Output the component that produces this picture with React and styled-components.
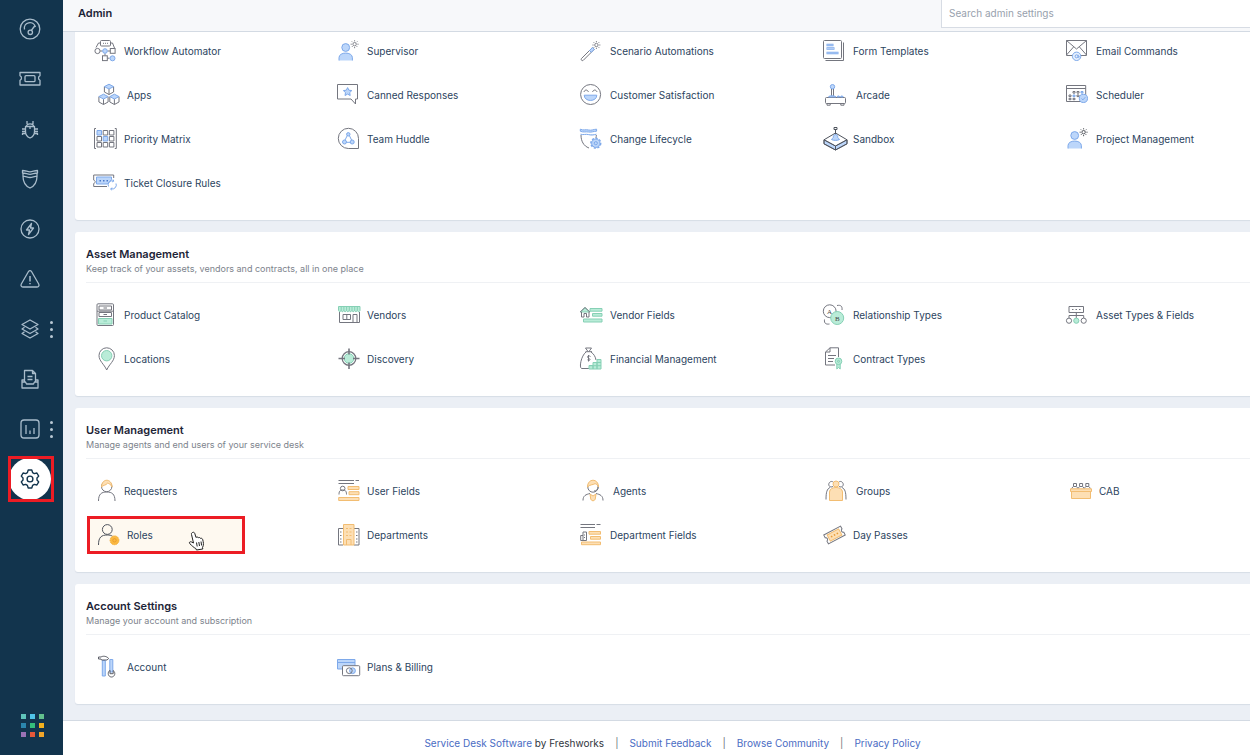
import styled, { createGlobalStyle } from "styled-components";

const GlobalStyle = createGlobalStyle`
  * {
    box-sizing: border-box;
  }

  body {
    margin: 0;
    background: #ebeff5;
    color: #2c3e5a;
    font-family: Inter, "Liberation Sans", sans-serif;
    font-size: 10px;
  }

  a {
    text-decoration: none;
  }
`;

const ink = "#74767f";
const blue = { line: "#7ea9ea", fill: "#bcd6fa" };
const green = { line: "#86d0b5", fill: "#b9ecd8" };
const orange = { line: "#f2bd72", fill: "#fddfb4" };

/* ---------- layout ---------- */

const Shell = styled.div`
  display: flex;
  min-height: 100vh;
`;

const Sidebar = styled.nav`
  display: flex;
  flex: none;
  flex-direction: column;
  justify-content: space-between;
  width: 63px;
  padding: 4px 0 18px;
  background: #12344d;
`;

const NavList = styled.ul`
  margin: 0;
  padding: 0;
  list-style: none;
`;

const NavItem = styled.li`
  position: relative;
  display: flex;
  align-items: center;
  height: 50px;
  padding-left: 8px;
`;

const NavButton = styled.button`
  display: flex;
  align-items: center;
  justify-content: center;
  width: 46px;
  height: 46px;
  padding: 0;
  overflow: hidden;
  border: 3px solid ${(p) => (p.$active ? "#ec1c24" : "transparent")};
  background: none;
  color: ${(p) => (p.$active ? "#12344d" : "#a9bccb")};
  cursor: pointer;
`;

const Disc = styled.span`
  display: flex;
  flex: none;
  align-items: center;
  justify-content: center;
  width: 42px;
  height: 42px;
  margin-right: 2px;
  border-radius: 50%;
  background: ${(p) => (p.$active ? "#fff" : "none")};
`;

const Dots = styled.span`
  position: absolute;
  top: 17px;
  left: 50px;
  display: grid;
  gap: 4px;

  i {
    width: 3px;
    height: 3px;
    border-radius: 50%;
    background: #b9c8d4;
  }
`;

const Switcher = styled.button`
  display: grid;
  grid-template-columns: repeat(3, 5px);
  gap: 4px;
  width: 23px;
  margin-left: 21px;
  padding: 0;
  border: 0;
  background: none;
  cursor: pointer;
`;

const Square = styled.span`
  height: 5px;
  background: ${(p) => p.$color};
`;

const Main = styled.div`
  display: flex;
  flex: 1;
  flex-direction: column;
  min-width: 0;
  overflow: hidden;
`;

const Header = styled.header`
  position: relative;
  display: flex;
  justify-content: space-between;
  height: 31px;
  padding-left: 15px;
  background: #f7f8fa;
  box-shadow: 0 1px 0 #d3dae3;
`;

const PageTitle = styled.h1`
  margin: 0;
  color: #1d2437;
  font-size: 11px;
  font-weight: 600;
  line-height: 27px;
`;

const Search = styled.input`
  width: 26%;
  min-width: 309px;
  height: 28px;
  padding: 0 7px 2px;
  border: 1px solid #d7dce4;
  border-width: 0 0 1px 1px;
  background: #fff;
  color: #2c3e5a;
  font: inherit;

  &::placeholder {
    color: #98a1ad;
    opacity: 1;
  }
`;

const Content = styled.main`
  display: grid;
  gap: 12px;
  padding: 0 0 16px 12px;
`;

const Card = styled.section`
  padding-left: 11px;
  border-radius: ${(p) => (p.$continued ? "0 0 0 3px" : "3px 0 0 3px")};
  background: #fff;
  box-shadow: 0 1px 1px #d6dde6;
`;

const CardHeader = styled.header`
  height: 51px;
  padding-top: 14px;
  border-bottom: 1px solid #eff1f4;
`;

const CardTitle = styled.h2`
  margin: 0;
  color: #1d2437;
  font-size: 11px;
  font-weight: 600;
  line-height: 16px;
`;

const CardText = styled.p`
  margin: 0;
  color: #7d838c;
  font-size: 9px;
  line-height: 14px;
`;

const Grid = styled.div`
  display: grid;
  grid-template-columns: repeat(5, minmax(243px, 1fr));
  gap: 6px 0;
  padding: ${(p) => (p.$continued ? "1px" : "13px")} 0 18px;
`;

const Setting = styled.a`
  position: relative;
  display: flex;
  align-items: center;
  gap: 8px;
  width: 158px;
  height: 38px;
  margin-left: 1px;
  padding-left: 2px;
  border: 3px solid ${(p) => (p.$active ? "#ec1c24" : "transparent")};
  background: ${(p) => (p.$active ? "#fef9f0" : "none")};
  color: #2c4460;
  white-space: nowrap;

  svg {
    flex: none;
  }
`;

const Pointer = styled.svg`
  position: absolute;
  top: 12px;
  left: 98px;
`;

const Footer = styled.footer`
  display: flex;
  flex: 1;
  align-items: flex-start;
  justify-content: center;
  gap: 11px;
  padding: 12px 0 2px 32px;
  border-top: 1px solid #d3dae3;
  background: #fff;
  color: #30343c;
  line-height: 20px;

  a {
    color: #4a6cc3;
  }
`;

const Divider = styled.span`
  color: #70757d;
`;

/* ---------- icons ---------- */

const Sun = ({ x, y, color = ink }) => (
  <g transform={`translate(${x} ${y})`} stroke={color} strokeWidth=".9">
    <circle r="1.7" />
    <path d="M0-2.8V-4M0 2.8V4M-2.8 0H-4M2.8 0H4M-2-2l-.8-.8M2-2l.8-.8M-2 2l-.8.8M2 2l.8.8" />
  </g>
);

const Cube = ({ x, y }) => (
  <g transform={`translate(${x} ${y})`}>
    <path d="M-4.6-2.6V2.8L0 5.3 4.6 2.8V-2.6M0-.2V5.3" />
    <path d="M0-5 4.6-2.6 0-.2-4.6-2.6Z" fill={blue.fill} stroke={blue.line} />
  </g>
);

const Cog = ({ x, y, tint }) => (
  <g transform={`translate(${x} ${y})`} stroke={tint.line}>
    <circle r="4.9" strokeWidth="1.5" strokeDasharray="2.2 1.5" />
    <circle r="4.2" fill={tint.fill} />
    <circle r="1.6" />
  </g>
);

const Person = ({ sun }) => (
  <>
    <g fill={blue.fill} stroke={blue.line}>
      <path d="M4 21.5v-2.8c0-6.2 13.4-6.2 13.4 0v2.8" />
      <circle cx="10.7" cy="8.5" r="3.9" />
    </g>
    <Sun x="19.6" y="5.2" color={sun} />
  </>
);

const settingIcons = {
  workflow: (
    <>
      <rect x="8.5" y="1.5" width="10" height="5.5" rx="1" />
      <path d="M11 4.3h1M13 4.3h1M15 4.3h1M8.5 4H6.5L4 8.500M18.5 4h2l2 5M8.3 12h2.2M15.5 12h2.7M13 14.5v2M15.5 19.2h2" />
      <circle cx="5.5" cy="12" r="2.6" />
      <rect x="18.3" y="9.5" width="4.8" height="4.8" />
      <rect x="10.5" y="16.8" width="4.8" height="4.8" />
      <g fill={blue.fill} stroke={blue.line}>
        <circle cx="13" cy="12" r="2.3" />
        <circle cx="20.5" cy="19.3" r="2.5" />
      </g>
    </>
  ),
  supervisor: <Person />,
  wand: (
    <>
      <path d="m3.4 19.6 11-11 1.8 1.8-11 11c-1.2.8-2.6-.6-1.8-1.8Z" />
      <path d="m11.5 11.5 3-3 1.8 1.8-3 3Z" fill={blue.fill} stroke={blue.line} />
      <Sun x="18.4" y="6" />
    </>
  ),
  form: (
    <>
      <path d="M22.5 3.5v18h-18" />
      <rect x="2.5" y="1.5" width="18" height="18" rx="1" />
      <path d="M5.5 6h7M5.5 9.5h8M5.5 14h12" stroke={blue.line} strokeWidth="2.4" />
      <path d="M6 6h6M6 9.5h7M6 14h11" stroke={blue.fill} strokeWidth=".8" />
    </>
  ),
  email: (
    <>
      <path d="M8 16.5H2.5v-15h20v15h-5.5M2.5 1.5l10 8.5 10-8.5M2.5 16l7-8M22.5 16l-7-8" />
      <g stroke={blue.line}>
        <circle cx="12.6" cy="17.3" r="4.2" fill="#e6f0fe" />
        <circle cx="12.6" cy="17.3" r="1.5" />
        <path d="M14.2 15.8v2.4c.4.8 1.2.4 1.2-.8" />
      </g>
    </>
  ),
  apps: (
    <>
      <Cube x="17" y="6.2" />
      <Cube x="11.5" y="16.2" />
      <Cube x="22.4" y="16.2" />
    </>
  ),
  canned: (
    <>
      <path d="M2.5 1.5h20v14.5h-2v5l-4.5-5H2.5Z" />
      <path
        d="m12.6 4.6 1.3 2.6 2.9.4-2.1 2 .5 2.9-2.6-1.4-2.6 1.4.5-2.9-2.1-2 2.9-.4Z"
        fill={blue.fill}
        stroke={blue.line}
      />
    </>
  ),
  smile: (
    <>
      <circle cx="12.6" cy="11.5" r="10" />
      <path d="M6 9c.6-2.6 3.6-2.6 4.4 0M14.6 9c.6-2.6 3.6-2.6 4.4 0" />
      <path d="M6.2 12.2h12.6c0 7-12.6 7-12.6 0Z" fill={blue.fill} stroke={blue.line} />
    </>
  ),
  arcade: (
    <>
      <path d="M10.500 6v8.500h2V6M6 20.500v1.700h3.200v-1.700M19.800 20.500v1.700H23v-1.700" />
      <rect x="4.5" y="14.5" width="20" height="6" rx="1" />
      <g fill={blue.fill} stroke={blue.line}>
        <circle cx="11.5" cy="3.7" r="2.2" />
        <path d="M7.5 14c.5-1.6 6.5-1.6 7.5 0ZM16 14c.3-1.4 2.4-1.4 2.7 0ZM19.5 14c.3-1.4 2.4-1.4 2.7 0Z" />
      </g>
    </>
  ),
  scheduler: (
    <>
      <path d="M2.5 2.5h19.2v16H2.5ZM2.5 5.5h19.2" />
      <path d="M9 8.5h2v1.600H9ZM13 8.5h2v1.600h-2ZM5 12h2v1.600H5ZM13 12h2v1.600h-2ZM5 15.300h2v1.400H5ZM9 15.300h2v1.400H9Z" />
      <g fill={blue.fill} stroke={blue.line}>
        <path d="M17 8.5h2v1.600h-2ZM9 12h2v1.600H9Z" />
        <circle cx="19.4" cy="15.4" r="4.1" />
        <path d="m17.5 15.5 1.4 1.4 2.4-2.7" />
      </g>
    </>
  ),
  matrix: (
    <>
      <path d="M4 1.5H2.5v20H4M22.8 1.5h1.5v20h-1.5" />
      <path d="M11.2 3.5h4.5V8h-4.5ZM17.4 3.5h4.5V8h-4.5ZM5 9.5h4.5V14H5ZM17.4 9.5h4.5V14h-4.5ZM5 15.5h4.5V20H5ZM11.2 15.5h4.5V20h-4.5ZM17.4 15.5h4.5V20h-4.5Z" />
      <path d="M5 3.5h4.5V8H5ZM11.2 9.5h4.5V14h-4.5Z" fill={blue.fill} stroke={blue.line} />
    </>
  ),
  huddle: (
    <>
      <path d="M23.5 21.5H13.3a10.1 10.1 0 1 1 10.2-10Z" />
      <g fill={blue.fill} stroke={blue.line}>
        <path d="M12.8 7.5 9 15M13.8 7.5 17.6 15M10.4 15.3h6" fill="none" />
        <circle cx="13.3" cy="7.3" r="1.7" />
        <circle cx="9.5" cy="15" r="2" />
        <circle cx="17.2" cy="15" r="2" />
      </g>
    </>
  ),
  lifecycle: (
    <>
      <path d="M3 8c0 6 2.5 11 8 13M18.3 8c0 1.2-.1 2-.3 3" />
      <path
        d="M2.3 2.2c3 1.5 5.5 0 8.3.8s5-.8 8-.8v2c-3 0-5.2 1.4-8 .8s-5.3.7-8.3-.8ZM2.5 7.2c3 1 5.2-.4 8.1.4s5 .4 7.8-.4"
        fill={blue.fill}
        stroke={blue.line}
      />
      <Cog x="17.8" y="16.2" tint={blue} />
    </>
  ),
  sandbox: (
    <>
      <path d="M3 12.8v4L14.5 23 26 16.8v-4L14.5 19Z" fill={blue.fill} />
      <path
        d="m14.5 6 11.5 6.8L14.5 19 3 12.8ZM14.5 19v4M3 12.8v4L14.5 23 26 16.8v-4M13 .5h3v2h-3ZM14.5 2.5v5"
        stroke="#4f545e"
      />
      <path
        d="M10.500 12.500c.4-1 1.300-1 1.700-2 0-4 4.600-4 4.600 0 .4 1 1.300 1 1.700 2-2 1.200-6 1.200-8 0Z"
        fill={blue.fill}
        stroke={blue.line}
      />
    </>
  ),
  project: <Person sun="#3f434b" />,
  closure: (
    <>
      <path d="M15 15.5H1.7v-3c2-.6 2-2.8 0-3.4V4h20v3" />
      <path d="M4.5 6h15v2.5l-4 4.5h-11Z" fill={blue.fill} stroke={blue.line} />
      <path d="M7.5 9.7H9M11 9.7h1.500M14.5 9.700H16" stroke="#4b79c9" strokeWidth="1.4" />
      <path
        d="M16.500 15.500a4 4 0 0 1 5-5.500M24 12.500a4 4 0 0 1-5 5.300M21 8.500l.8 1.600-1.600.8M19.500 19.300l-.8-1.600 1.600-.8"
        stroke={blue.line}
      />
    </>
  ),
  catalog: (
    <>
      <rect x="5" y=".8" width="16.5" height="21.7" rx="1" />
      <path d="M7 3h12.5v4H7ZM7 9.5h12.5v4H7ZM11.5 5H15M11.5 11.5H15M5 8.2h16.5" />
      <path d="M6.5 15.5H20V21H6.5ZM11.5 18H15" fill={green.fill} stroke={green.line} />
    </>
  ),
  vendors: (
    <>
      <path d="M4.5 9v10.5h20V9M8 11.5h7.5v5H8ZM11.8 11.5v5M18 19.5v-8h4v8" />
      <path
        d="M3.5 3.500H25v4c-.8 1.600-2 1.600-2.700 0-.8 1.600-2 1.600-2.700 0-.8 1.600-2 1.600-2.700 0-.8 1.600-2 1.600-2.700 0-.8 1.600-2 1.600-2.700 0-.8 1.600-2 1.600-2.700 0-.8 1.600-2 1.600-2.700 0-.8 1.600-1.900 1.600-2.600 0Z"
        fill={green.fill}
        stroke={green.line}
      />
      <path
        d="M6.2 3.5v4M8.900 3.500v4M11.600 3.500v4M14.300 3.500v4M17 3.500v4M19.700 3.500v4M22.300 3.500v4"
        stroke={green.line}
      />
    </>
  ),
  vendorFields: (
    <>
      <path
        d="M12 5.500h12v2.700H12ZM14.500 10.500H24v2.700h-9.500ZM5.500 16H24v3H5.500ZM2.500 9 7 4.500 11.500 9Z"
        fill={green.fill}
        stroke={green.line}
      />
      <path d="M3.500 9v5H6v-3.500h2.500V14H11V9M2 9.200l5-4.700 5 4.700" />
    </>
  ),
  relationship: (
    <>
      <circle cx="8.7" cy="8.2" r="6.4" />
      <path d="M16 2.5c4-.8 5.500 1 5 4.500M3.500 16.500c-.5 4 1.500 5 5 4.500" />
      <circle cx="16.2" cy="15" r="6.5" fill={green.fill} stroke={green.line} />
      <g fill="#444" stroke="none" fontFamily="Liberation Serif" fontSize="7">
        <text x="6" y="10.500">A</text>
        <text x="14" y="17.500">B</text>
      </g>
    </>
  ),
  assetTypes: (
    <>
      <path d="M5 3.500h14.500v6H5ZM8 6.500h1.500M11.500 6.500H13M15 6.500h1.500M12.300 9.500V15M5 15v-2.500h14.700V15" />
      <circle cx="5" cy="17.7" r="2.6" />
      <circle cx="19.7" cy="17.7" r="2.6" />
      <circle cx="12.3" cy="17.7" r="2.6" fill={green.fill} stroke={green.line} />
    </>
  ),
  location: (
    <>
      <path d="M14.7 23C12 17 7 14 7 8.500a7.700 7.700 0 0 1 15.400 0C22.400 14 17.400 17 14.700 23Z" />
      <circle cx="14.7" cy="8.7" r="5.2" fill={green.fill} stroke={green.line} />
    </>
  ),
  discovery: (
    <>
      <circle cx="14" cy="11.5" r="6.8" strokeWidth="1.3" />
      <circle cx="14" cy="11.5" r="4.8" fill={green.fill} stroke={green.line} />
      <path d="M14 1.500V7.500M14 15.500V22M3.500 11.500H10M18 11.500h6.500" strokeWidth="1.6" />
    </>
  ),
  finance: (
    <>
      <path d="M10 4.500 7.500 1h6L11 4.500M7.500 4.700h6.500M8 5C3 9 1 20.500 3.500 21.500H12M13 5c3 2 4.500 5 5 8" />
      <path d="M12.500 9.500c-2-1.500-4.500.3-2 1.600s2 3-1 1.700M10.500 8v6.500" />
      <path
        d="M11 18.500h4V22h-4ZM15 15.500h4V22h-4ZM19 12.500h4V22h-4ZM11 18.700h12M15 15.500h8"
        fill={green.fill}
        stroke={green.line}
      />
    </>
  ),
  contract: (
    <>
      <path d="M14 18H4.500V5L9 .8h8.500V10M4.500 5H9V.8M7 8.500h8M7 11.500h6M7 14.500h5" />
      <g fill={green.fill} stroke={green.line}>
        <path d="M15.800 17v5l1.700-1.500 1.700 1.500v-5" />
        <circle cx="17.5" cy="14.3" r="3.3" />
        <circle cx="17.5" cy="14.3" r="1" />
      </g>
    </>
  ),
  requester: (
    <>
      <circle cx="14.7" cy="7.5" r="5.2" />
      <path d="M6.500 22c0-7 3-9 8.200-9s8.300 2 8.300 9" />
      <path
        d="M9.500 8c0-9 10.500-9 10.500 0-1-2.500-3-3.500-4.500-3.800C14 6.500 11 6 9.500 8Z"
        fill={orange.fill}
        stroke={orange.line}
      />
    </>
  ),
  userFields: (
    <>
      <path d="M3.500 1.500H19M20.500 1.500H24M3.500 4.500H19M4 15.500c0-4 1.500-4.500 3.700-4.500s3.800.5 3.800 4.500" />
      <circle cx="7.7" cy="9.5" r="2.3" />
      <path
        d="M13 7.500h11v3H13ZM14 12.700h10v3H14ZM3.700 18.500H24v3H3.700Z"
        fill={orange.fill}
        stroke={orange.line}
      />
    </>
  ),
  agent: (
    <>
      <circle cx="15" cy="8" r="5.2" />
      <path d="M5 21.500c0-5 3-6 7-7M25 21.500c0-5-3-6-7-7M20 8c0 2.500-1.500 4-4 4" />
      <path
        d="M9.500 8c0-9 11-9 11 0-1-2.500-2-3-3.500-3.300C15 6 11.500 5.500 9.500 8ZM12 15l3 2 3-2-.8 5.500L15 22l-2.200-1.500Z"
        fill={orange.fill}
        stroke={orange.line}
      />
    </>
  ),
  groups: (
    <>
      <path d="M12 7.500C9 9 7 6.500 8 4.300 9 2 11.500 2 12.500 3.500M18 7.500c3 1.500 5-1 4-3.200-1-2.300-3.500-2.300-4.500-.8M5 20.500C5 13 6 10 9 8.500M25 20.500C25 13 24 10 21 8.500" />
      <g fill={orange.fill} stroke={orange.line}>
        <path d="M8.500 21.500V13c0-6 13-6 13 0v8.500Z" />
        <circle cx="15" cy="5" r="3" />
      </g>
    </>
  ),
  cab: (
    <>
      <path d="M7.500 9.500 9.300 7.500h3.200l1.500 2 1.500-2h3.200l1.500 2 1.500-2h3.200l1.600 2M9.500 7V4.500h3V7M15.600 7V4.500h3V7M21.800 7V4.500h3V7" />
      <path
        d="M7.500 12.500h19v7h-19ZM6.500 9.800h21v2.700h-21Z"
        fill={orange.fill}
        stroke={orange.line}
      />
    </>
  ),
  roles: (
    <>
      <g stroke="#4f545e">
        <circle cx="15.3" cy="6.5" r="4.9" />
        <path d="M6.500 22c0-8 3-10 8.800-10 2.200 0 4 .3 5.200 1.200" />
      </g>
      <circle
        cx="22.5"
        cy="17.3"
        r="4.4"
        fill="#fbb941"
        stroke="#f5ad35"
        strokeDasharray="1.5 .6"
      />
      <circle cx="22.5" cy="17.3" r="1.7" stroke="#e4952a" strokeWidth=".8" />
    </>
  ),
  departments: (
    <>
      <path d="M8 5.500H3.500V22H8M19 5.500h5V22h-5M5 9h1.500M5 12.500h1.500M5 16h1.500M5 19h1.500M21 9h1.500M21 12.500h1.500M21 16h1.500M21 19h1.500" />
      <path d="M8.500 1.500H19V22H8.500Z" fill={orange.fill} stroke={orange.line} />
      <path
        d="M11 5.500h2M14.500 5.500h2M11 9h2M14.500 9h2M11 12.500h2M14.500 12.500h2M11.500 22v-5.500H16V22"
        stroke={orange.line}
      />
    </>
  ),
  departmentFields: (
    <>
      <path d="M2.500 1.500H17M18.500 1.500h4M2.500 4.500H17M5 9h3.500v8.500H5ZM5 12.500H2.700v5H5M6.500 11.500v1M6.500 14v1" />
      <path
        d="M11 8.500h11.500v2.700H11ZM12.500 13.500h10v2.700h-10ZM3.500 19h19v2.700h-19Z"
        fill={orange.fill}
        stroke={orange.line}
      />
    </>
  ),
  passes: (
    <g transform="rotate(-28 13.5 12)">
      <path d="M4 7h19v3.200c-2 .5-2 3.100 0 3.600V17H4v-3.200c2-.5 2-3.100 0-3.600Z" />
      <path d="M7 8.500h13v7H7Z" fill={orange.fill} stroke={orange.line} />
      <path d="M9.500 12H11M12.800 12h1.500M16 12h1.500" stroke="#e89c38" strokeWidth="1.6" />
    </g>
  ),
  account: (
    <>
      <g fill={blue.fill} stroke={blue.line}>
        <path d="M10.300 5.500h3V21h-3ZM17.800 4.500h3V17h-3Z" />
      </g>
      <g fill="#fff" stroke="#5d5f68">
        <path d="M6.500 2H9c2-1.300 5.500-1 7.700 1.500L15 5H9.500L9 4H6.500Z" />
        <path d="M18 15.300c-3 2-2 6.500 1.400 6.700 3.500 0 4.600-4.500 1.800-6.500v3.200H18Z" />
      </g>
    </>
  ),
  billing: (
    <>
      <path d="M2.500 4.500H20V14H2.500ZM2.500 7.500H20" fill={blue.fill} stroke={blue.line} />
      <rect x="7.5" y="10.7" width="17.2" height="10" rx="1" fill="#fff" />
      <circle cx="17.5" cy="15.7" r="2.9" fill={blue.fill} stroke={blue.line} />
      <circle cx="14.3" cy="15.7" r="2.9" />
    </>
  ),
};

const navIcons = {
  dashboard: (
    <>
      <circle cx="12" cy="12" r="9.8" />
      <path d="M6.500 12.500c-1.500-7.500 9-9.500 11-2.500M13.300 13.500l3.700-5" />
      <circle cx="12.3" cy="15.3" r="2.2" />
    </>
  ),
  tickets: (
    <>
      <path d="M2 5.500h20v3.200c-2 1-2 3.600 0 4.600V18H2v-4.700c2-1 2-3.600 0-4.600Z" />
      <rect x="7" y="8.7" width="10" height="6" rx="1" />
    </>
  ),
  problems: (
    <path d="M9 7V4M15 7V4M8.500 9.500c0-3.500 7-3.500 7 0M7.500 9.500h9v5c0 3-2 5.500-4.500 6.500-2.500-1-4.500-3.500-4.500-6.500ZM7.500 12H4M7.500 14.500H4M8 16.500H4.500V18M16.500 12H20M16.500 14.500H20M16 16.500h3.500V18M12 9.500V12" />
  ),
  changes: (
    <path d="M4.500 3.500c3 0 5 1.300 7.500 1.300s4.500-1.300 7.500-1.300V6c-3 0-5 1.300-7.500 1.300S7.500 6 4.500 6ZM5 9.200c3 .2 4.500 1.300 7 1.300s4-1.100 7-1.300c0 5.500-2.500 9.800-7 11.800-4.500-2-7-6.300-7-11.800ZM5 6v3.200M19 6v3.200" />
  ),
  releases: (
    <>
      <circle cx="12" cy="12" r="9" />
      <path d="M13.500 6.500 8.500 13h3l-1 4.500 5-6.500h-3Z" />
    </>
  ),
  alerts: (
    <>
      <path d="M10.500 4.500 3.300 17c-.8 1.500 0 3 1.500 3h14.400c1.500 0 2.300-1.500 1.500-3L13.500 4.500c-.8-1.200-2.200-1.200-3 0Z" />
      <path d="M12 9v5.500M12 16v1.200" strokeWidth="1.5" />
    </>
  ),
  assets: (
    <path d="m12 3 8 4.500-8 4.500-8-4.500ZM6.500 10.300 4 12l8 4.500 8-4.500-2.500-1.700M6.500 14.800 4 16.500l8 4.500 8-4.500-2.500-1.700" />
  ),
  purchases: (
    <path d="M6.500 15V3.500h8l3 3V15M14.500 3.500v3h3M9.500 9.500h5M9.500 12.500h5M4 15h3.500l1 2h7l1-2H20v6H4ZM4 18v-5h2.500M20 18v-5h-2.500" />
  ),
  reports: (
    <>
      <rect x="3" y="3" width="18" height="18" rx="3" />
      <path d="M8 8v9M12 13.500V17M16 11v6" />
    </>
  ),
  admin: (
    <g strokeWidth="1.4">
      <path d="M10.200 3h3.600l.8 2.600 1.700 1 2.600-.6 1.800 3.100L19 11v2l1.700 1.900-1.800 3.100-2.600-.6-1.700 1-.8 2.600h-3.600l-.8-2.600-1.700-1-2.600.6-1.800-3.100L5 13v-2L3.300 9.100 5.100 6l2.600.6 1.700-1Z" />
      <circle cx="12" cy="12" r="2.9" />
    </g>
  ),
};

/* ---------- data ---------- */

const navItems = [
  { id: "dashboard", label: "Dashboard" },
  { id: "tickets", label: "Tickets" },
  { id: "problems", label: "Problems" },
  { id: "changes", label: "Changes" },
  { id: "releases", label: "Releases" },
  { id: "alerts", label: "Alerts" },
  { id: "assets", label: "Assets", more: true },
  { id: "purchases", label: "Purchases" },
  { id: "reports", label: "Reports", more: true },
  { id: "admin", label: "Admin", active: true },
];

const squares = [
  "#5fc4ba",
  "#4fc3e8",
  "#62c08d",
  "#2b86ad",
  "#35bd7c",
  "#f2b01e",
  "#9a72b5",
  "#e4583a",
  "#f0a52a",
];

const sections = [
  {
    items: [
      { icon: "workflow", name: "Workflow Automator" },
      { icon: "supervisor", name: "Supervisor" },
      { icon: "wand", name: "Scenario Automations" },
      { icon: "form", name: "Form Templates" },
      { icon: "email", name: "Email Commands" },
      { icon: "apps", name: "Apps", wide: true },
      { icon: "canned", name: "Canned Responses" },
      { icon: "smile", name: "Customer Satisfaction" },
      { icon: "arcade", name: "Arcade", wide: true },
      { icon: "scheduler", name: "Scheduler" },
      { icon: "matrix", name: "Priority Matrix" },
      { icon: "huddle", name: "Team Huddle" },
      { icon: "lifecycle", name: "Change Lifecycle" },
      { icon: "sandbox", name: "Sandbox" },
      { icon: "project", name: "Project Management" },
      { icon: "closure", name: "Ticket Closure Rules" },
    ],
  },
  {
    title: "Asset Management",
    text: "Keep track of your assets, vendors and contracts, all in one place",
    items: [
      { icon: "catalog", name: "Product Catalog" },
      { icon: "vendors", name: "Vendors" },
      { icon: "vendorFields", name: "Vendor Fields" },
      { icon: "relationship", name: "Relationship Types" },
      { icon: "assetTypes", name: "Asset Types & Fields" },
      { icon: "location", name: "Locations" },
      { icon: "discovery", name: "Discovery" },
      { icon: "finance", name: "Financial Management" },
      { icon: "contract", name: "Contract Types" },
    ],
  },
  {
    title: "User Management",
    text: "Manage agents and end users of your service desk",
    items: [
      { icon: "requester", name: "Requesters" },
      { icon: "userFields", name: "User Fields" },
      { icon: "agent", name: "Agents", wide: true },
      { icon: "groups", name: "Groups", wide: true },
      { icon: "cab", name: "CAB", wide: true },
      { icon: "roles", name: "Roles", wide: true, active: true },
      { icon: "departments", name: "Departments" },
      { icon: "departmentFields", name: "Department Fields" },
      { icon: "passes", name: "Day Passes" },
    ],
  },
  {
    title: "Account Settings",
    text: "Manage your account and subscription",
    items: [
      { icon: "account", name: "Account", wide: true },
      { icon: "billing", name: "Plans & Billing" },
    ],
  },
];

const SettingLink = ({ icon, name, wide, active }) => (
  <Setting href="#" $active={active}>
    <svg
      width={wide ? 27 : 24}
      height="24"
      fill="none"
      stroke={ink}
      overflow="visible"
      aria-hidden="true"
    >
      {settingIcons[icon]}
    </svg>
    {name}
    {active && (
      <Pointer width="18" height="20" viewBox="0 0 18 20" aria-hidden="true">
        <path
          d="M4.500 1.500c1-.6 2 0 2.300 1L8 6.500c.8-.8 2-.6 2.300.3.800-.6 1.900-.3 2.200.6.900-.4 2 .1 2.200 1.200.7 2.700 1.300 5.200-.2 8l.3 1.400-6.300 1-.7-1.500c-2-.8-4-3-6-4.800-1.200-1.300.3-2.500 1.800-1.700l1.900 1L3.500 3.500c-.3-.9.200-1.700 1-2Z"
          fill="#fff"
          stroke="#222"
        />
        <path d="m8.500 11.500.7 4M10.800 11l.7 4M13 10.500l.6 4" stroke="#222" />
      </Pointer>
    )}
  </Setting>
);

const App = () => {
  return (
    <Shell>
      <GlobalStyle />
      <Sidebar aria-label="Main">
        <NavList>
          {navItems.map(({ id, label, more, active }) => (
            <NavItem key={id}>
              <NavButton aria-label={label} $active={active}>
                <Disc $active={active}>
                  <svg
                    width="24"
                    height="24"
                    fill="none"
                    stroke="currentColor"
                    strokeWidth="1.3"
                    strokeLinejoin="round"
                  >
                    {navIcons[id]}
                  </svg>
                </Disc>
              </NavButton>
              {more && (
                <Dots>
                  <i />
                  <i />
                  <i />
                </Dots>
              )}
            </NavItem>
          ))}
        </NavList>
        <Switcher aria-label="Switch product">
          {squares.map((color) => (
            <Square key={color} $color={color} />
          ))}
        </Switcher>
      </Sidebar>

      <Main>
        <Header>
          <PageTitle>Admin</PageTitle>
          <Search
            type="search"
            placeholder="Search admin settings"
            aria-label="Search admin settings"
          />
        </Header>

        <Content>
          {sections.map(({ title, text, items }) => (
            <Card key={title || "helpdesk"} $continued={!title}>
              {title && (
                <CardHeader>
                  <CardTitle>{title}</CardTitle>
                  <CardText>{text}</CardText>
                </CardHeader>
              )}
              <Grid $continued={!title}>
                {items.map((item) => (
                  <SettingLink key={item.name} {...item} />
                ))}
              </Grid>
            </Card>
          ))}
        </Content>

        <Footer>
          <span>
            <a href="#">Service Desk Software</a> by Freshworks
          </span>
          <Divider>|</Divider>
          <a href="#">Submit Feedback</a>
          <Divider>|</Divider>
          <a href="#">Browse Community</a>
          <Divider>|</Divider>
          <a href="#">Privacy Policy</a>
        </Footer>
      </Main>
    </Shell>
  );
};

export default App;
